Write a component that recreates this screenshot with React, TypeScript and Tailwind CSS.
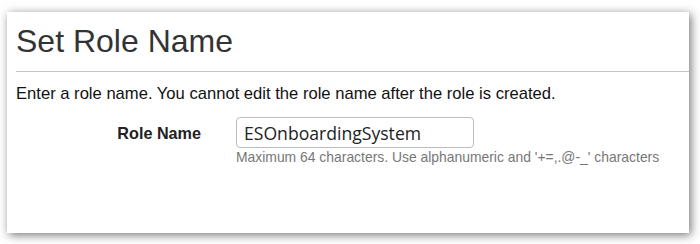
export default function App() {
  return (
    <div className="h-[244px] w-[700px] overflow-hidden bg-white pl-[7px] pt-[12px]">
      <div className="flex h-[221px] w-[682px] flex-col bg-white shadow-[2px_2px_9px_rgba(0,0,0,0.55)] font-['Liberation_Sans',Arial,sans-serif] text-[#222]">
        <h1 className="ml-[9px] pt-[11px] text-[32px] leading-[37px] text-[#333]">Set Role Name</h1>
        <div className="ml-[9px] mt-[11px] border-t border-[#c4c4c4]" />
        <p className="ml-[9px] mt-[13px] text-[16.6px] leading-[18px] text-[#111]">
          Enter a role name. You cannot edit the role name after the role is created.
        </p>
        <div className="mt-[14px] flex">
          <label className="w-[194px] pt-[7px] text-right text-[16.2px] font-bold leading-[18px] text-[#222]">
            Role Name
          </label>
          <div className="ml-[35px] flex flex-col">
            <input
              readOnly
              value="ESOnboardingSystem"
              className="h-[31px] w-[238px] rounded-[4px] border border-[#bdbdbd] px-[7px] font-['Open_Sans',sans-serif] text-[17.6px] text-[#222] outline-none"
            />
            <span className="mt-[1px] text-[13.9px] leading-[16px] text-[#777]">
              Maximum 64 characters. Use alphanumeric and '+=,.@-_' characters
            </span>
          </div>
        </div>
      </div>
    </div>
  );
}
